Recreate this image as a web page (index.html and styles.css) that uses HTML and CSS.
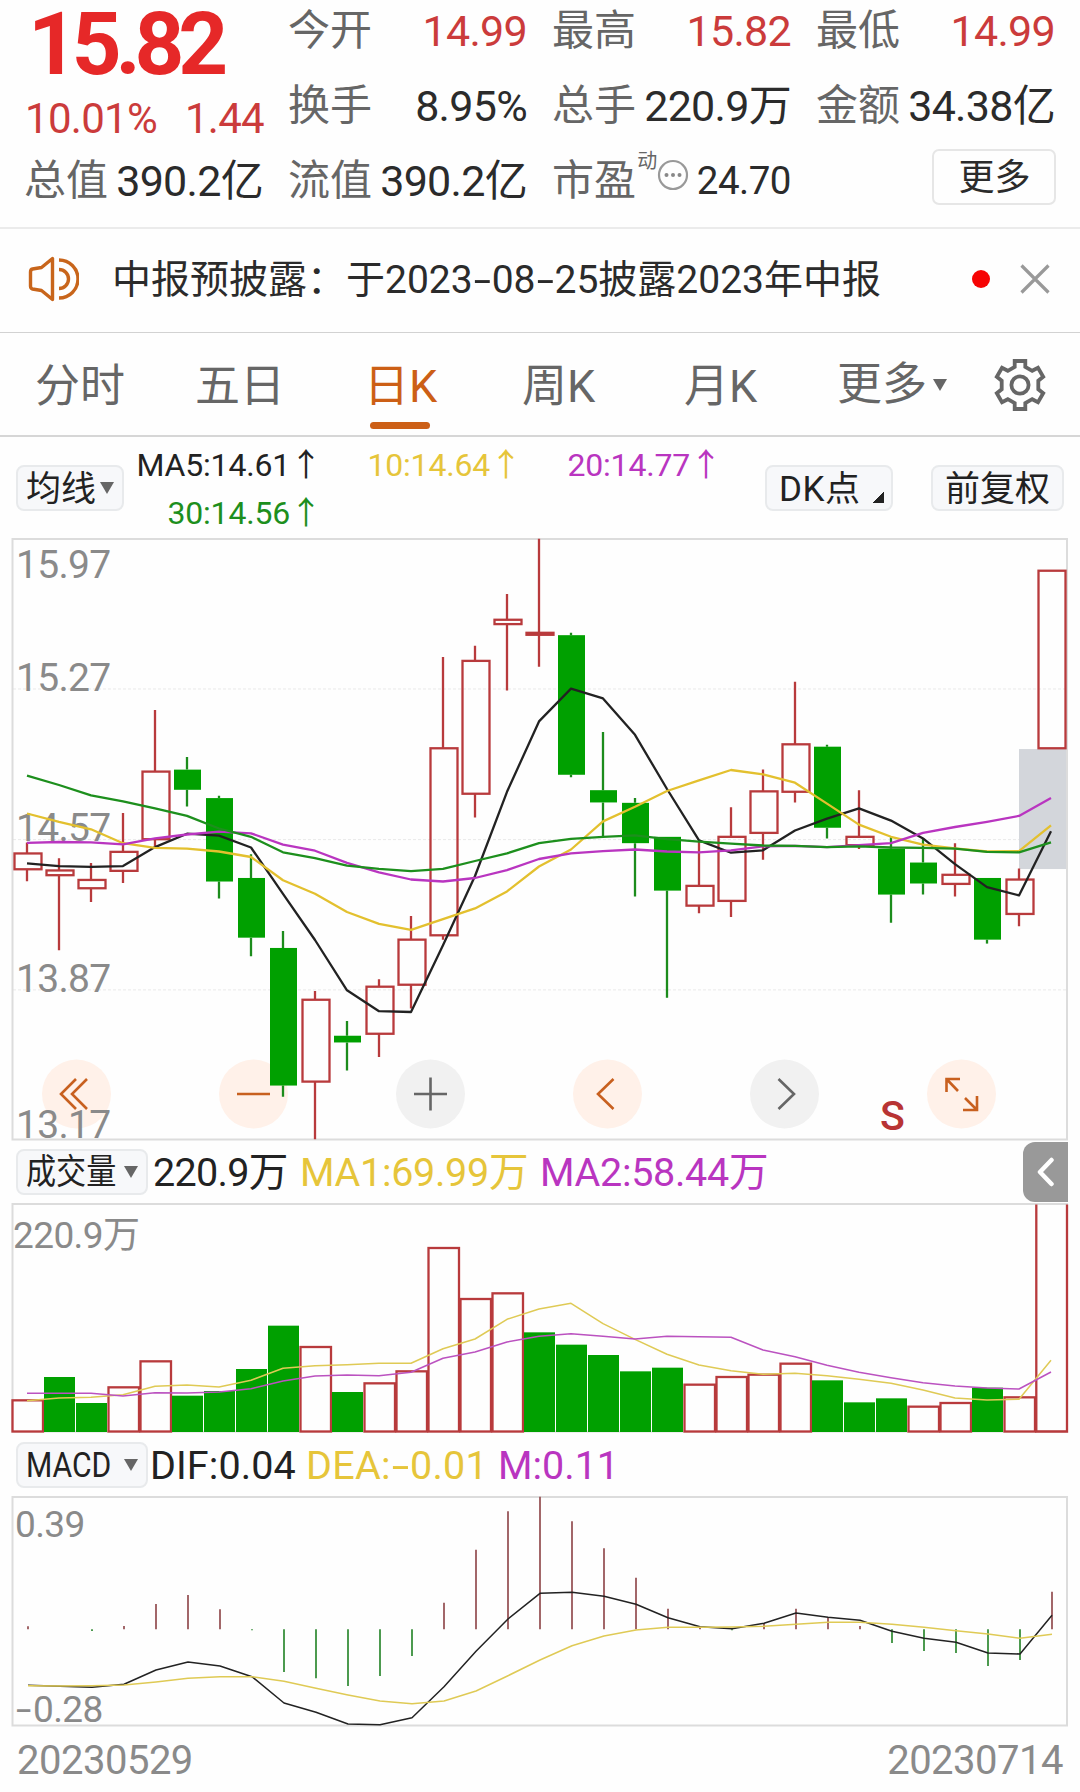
FILE: index.html
```html
<!DOCTYPE html>
<html lang="zh-CN">
<head>
<meta charset="utf-8">
<title>日K</title>
<link rel="stylesheet" href="styles.css">
</head>
<body>
<main class="page">
  <section class="quote">
    <div class="headline">
      <div class="price">15.82</div>
      <div class="change"><span>10.01%</span><span>1.44</span></div>
    </div>
    <div class="cell"><span class="label">今开</span><span class="value up">14.99</span></div>
    <div class="cell"><span class="label">最高</span><span class="value up">15.82</span></div>
    <div class="cell"><span class="label">最低</span><span class="value up">14.99</span></div>
    <div class="cell"><span class="label">换手</span><span class="value">8.95%</span></div>
    <div class="cell"><span class="label">总手</span><span class="value">220.9万</span></div>
    <div class="cell"><span class="label">金额</span><span class="value">34.38亿</span></div>
    <div class="cell"><span class="label">总值</span><span class="value">390.2亿</span></div>
    <div class="cell"><span class="label">流值</span><span class="value">390.2亿</span></div>
    <div class="cell">
      <span class="label">市盈</span><span class="sup">动</span>
      <svg class="info" width="32" height="32" viewBox="0 0 32 32"><circle cx="16" cy="16" r="14" fill="none" stroke="#999" stroke-width="2.2"/><g fill="#888"><circle cx="9.5" cy="16" r="2"/><circle cx="16" cy="16" r="2"/><circle cx="22.5" cy="16" r="2"/></g></svg>
      <span class="value small">24.70</span>
    </div>
    <div class="cell end"><button class="more">更多</button></div>
  </section>

  <section class="notice">
    <svg class="speaker" width="52" height="46" viewBox="0 0 52 46" fill="none" stroke="#c8651b" stroke-width="3.4" stroke-linejoin="round"><path d="M25.500 2.500V43.500L14.500 34.500L5.500 33Q3.500 32.500 3.500 30V16Q3.500 13.500 5.500 13L14.500 11.500Z"/><path d="M32 4A19 19 0 0 1 32 42M32 13.500A9.500 9.500 0 0 1 32 32.500"/></svg>
    <p class="notice-text">中报预披露：于2023<span class="dash">-</span>08<span class="dash">-</span>25披露2023年中报</p>
    <span class="dot"></span>
    <svg class="close" width="30" height="30" viewBox="0 0 30 30" stroke="#999" stroke-width="3.2"><path d="M1.500 1.500L28.500 28.500M28.500 1.500L1.500 28.500"/></svg>
  </section>

  <nav class="tabs">
    <a class="tab">分时</a>
    <a class="tab">五日</a>
    <a class="tab active">日K</a>
    <a class="tab">周K</a>
    <a class="tab">月K</a>
    <a class="tab more-tab">更多<i class="caret"></i></a>
    <svg class="gear" width="54" height="54" viewBox="0 0 54 54" fill="none" stroke="#666" stroke-width="3.8"><path d="M21.700 3H32.300V8.800L39.200 12.800L45 9.800L50.200 18.700L45.300 22.700V31.300L50.200 35.300L45 44.200L39.200 41.200L32.300 45.200V51H21.700V45.200L14.800 41.200L9 44.200L3.800 35.300L8.700 31.300V22.700L3.800 18.700L9 9.800L14.800 12.800L21.700 8.800Z"/><circle cx="27" cy="27" r="8.600"/></svg>
  </nav>

  <section class="averages">
    <button class="chip"><span class="chip-text">均线</span><i class="caret"></i></button>
    <div class="ma-grid">
      <span class="ma c-black">MA5:14.61<b class="arrow">↑</b></span>
      <span class="ma c-yellow">10:14.64<b class="arrow">↑</b></span>
      <span class="ma c-purple">20:14.77<b class="arrow">↑</b></span>
      <span class="ma c-green">30:14.56<b class="arrow">↑</b></span>
    </div>
    <button class="chip dk"><span class="chip-text">DK点</span><i class="corner"></i></button>
    <button class="chip fq"><span class="chip-text">前复权</span></button>
  </section>

  <svg class="chart" id="kline" width="1080" height="604" viewBox="0 537 1080 604"></svg>

  <section class="indicator volume-row">
    <button class="chip narrow"><span class="squeeze">成交量</span><i class="caret"></i></button>
    <span class="c-black vol">220.9万</span>
    <span class="c-yellow ma1">MA1:69.99万</span>
    <span class="c-purple ma2">MA2:58.44万</span>
    <button class="collapse"><svg width="18" height="30" viewBox="0 0 18 30" fill="none" stroke="#fff" stroke-width="4.500" stroke-linecap="round" stroke-linejoin="round"><path d="M14.500 3L3 15L14.500 27"/></svg></button>
  </section>

  <svg class="chart" id="volume" width="1080" height="231" viewBox="0 1203 1080 231"></svg>

  <section class="indicator macd-row">
    <button class="chip narrow"><span class="squeeze">MACD</span><i class="caret"></i></button>
    <span class="c-black dif">DIF:0.04</span>
    <span class="c-yellow dea">DEA:<span class="dash">-</span>0.01</span>
    <span class="c-purple m">M:0.11</span>
  </section>

  <svg class="chart" id="macd" width="1080" height="231" viewBox="0 1496 1080 231"></svg>

  <footer class="dates"><span>20230529</span><span>20230714</span></footer>
</main>
<script src="chart.js"></script>
</body>
</html>
```
FILE: styles.css
```css
* { box-sizing: border-box; }
body {
  margin: 0;
  background: #fefefe;
  color: #2b2b2b;
  font-family: Roboto, "Noto Sans CJK SC", sans-serif;
}
button { font-family: inherit; color: inherit; padding: 0; margin: 0; }
.page { width: 1080px; height: 1792px; display: flex; flex-direction: column; }

.quote {
  height: 229px;
  flex: none;
  display: grid;
  grid-template-columns: repeat(4, 240px);
  grid-template-rows: 60px 90px 60px;
  column-gap: 24px;
  padding-left: 24px;
  border-bottom: 2px solid #ebebeb;
}
.headline { grid-row: 1 / 3; display: flex; flex-direction: column; }
.price {
  height: 87px;
  line-height: 88px;
  padding-left: 4px;
  font-size: 87px;
  font-weight: 700;
  letter-spacing: -6.200px;
  color: #e62828;
}
.change {
  display: flex;
  justify-content: space-between;
  height: 63px;
  line-height: 64px;
  padding-left: 1px;
  font-size: 42px;
  letter-spacing: -0.700px;
  color: #cb3b3b;
}
.cell { display: flex; align-items: center; justify-content: space-between; white-space: nowrap; }
.cell.end { justify-content: flex-end; }
.label { font-size: 42px; line-height: 60px; padding-top: 2px; color: #666; }
.value { font-size: 43px; line-height: 60px; padding: 1px 1px 0 0; letter-spacing: -0.700px; }
.value.up { color: #cb3b3b; }
.value.small { font-size: 38.500px; letter-spacing: -0.500px; }
.sup { align-self: flex-start; font-size: 20px; line-height: 20px; padding-top: 1px; color: #666; }
.info { align-self: flex-start; margin: 9px 7px 0 -2px; }
.more {
  width: 124px;
  height: 56px;
  margin-top: -6px;
  padding: 2px 0 0 1px;
  border: 2px solid #e6e6e6;
  border-radius: 7px;
  background: #fefefe;
  font-size: 36px;
  line-height: 48px;
}

.notice {
  height: 104px;
  flex: none;
  display: flex;
  align-items: center;
  padding: 0 30px 3px 27px;
  border-bottom: 1px solid #d2d2d2;
}
.notice-text { margin: 0 0 0 33px; padding-top: 2px; font-size: 39px; line-height: 60px; white-space: nowrap; flex: 1; }
.dash { display: inline-block; width: 19px; text-align: center; transform: scaleX(1.600); letter-spacing: 0; }
.dot { width: 18px; height: 18px; border-radius: 50%; background: #f60404; margin-right: 30px; }

.tabs {
  height: 104px;
  flex: none;
  display: grid;
  grid-template-columns: 160px 169px 158px 162px 153px 156px auto;
  align-items: center;
  padding-left: 35px;
  border-bottom: 2px solid #d6d6d6;
}
.tab { display: flex; flex-direction: column; align-items: flex-start; color: #666; font-size: 45px; line-height: 108px; white-space: nowrap; height: 104px; }
.tab.active { color: #cc5f16; }
.tab.active::after { content: ""; width: 60px; height: 7px; margin: -19px 0 0 6px; border-radius: 4px; background: #cc5f16; }
.more-tab { flex-direction: row; align-items: center; }
.caret { border: 7px solid transparent; border-top: 12px solid #666; border-bottom: 0; display: block; flex: none; }
.more-tab .caret { margin-left: 6px; }

.averages { height: 100px; flex: none; display: flex; padding-left: 16px; }
.chip {
  flex: none;
  display: flex;
  align-items: center;
  width: 108px;
  height: 46px;
  margin-top: 28px;
  padding-left: 8px;
  border: 2px solid #e8eaec;
  border-radius: 8px;
  background: #f7f8fa;
  font-size: 35px;
  line-height: 42px;
  color: #222;
  white-space: nowrap;
}
.chip-text { padding-top: 4px; }
.averages .chip .caret { margin-left: 4px; }
.ma-grid {
  flex: none;
  width: 600px;
  margin-left: -8px;
  padding-top: 4px;
  display: grid;
  grid-template-columns: repeat(3, 200px);
  grid-template-rows: 48px 48px;
}
.ma { display: flex; justify-content: flex-end; font-size: 32px; line-height: 48px; letter-spacing: -0.200px; white-space: nowrap; }
.arrow { font-family: "Noto Sans CJK SC", sans-serif; font-weight: 400; width: 30px; margin-right: -4px; line-height: 42px; }
.chip.dk { width: 128px; margin-left: 49px; padding-left: 12px; letter-spacing: 0.500px; }
.corner { width: 11px; height: 11px; margin: 18px 0 0 13px; background: linear-gradient(135deg, transparent 50%, #222 50%); }
.chip.fq { width: 133px; margin-left: 38px; padding-left: 12px; }

.chart { display: block; flex: none; overflow: visible; }
.indicator { display: flex; align-items: center; flex: none; padding-left: 16px; font-size: 39.500px; white-space: nowrap; line-height: 46px; }
.indicator > span { padding-top: 2px; }
.volume-row { height: 62px; }
.macd-row { height: 62px; }
.chip.narrow { width: 132px; margin: 0; padding-left: 8px; }
.squeeze { display: block; width: 98px; padding-top: 2px; transform: scaleX(0.860); transform-origin: left; }
.vol { width: 152px; margin-left: 5px; letter-spacing: -0.700px; }
.ma1 { width: 240px; margin-left: -5px; letter-spacing: -0.300px; }
.ma2 { width: 483px; letter-spacing: -0.300px; }
.collapse { width: 45px; height: 60px; border: 0; border-radius: 12px 0 0 12px; background: #999; display: flex; align-items: center; justify-content: center; }
.dif { width: 156px; margin-left: 2px; letter-spacing: 0.100px; }
.dea { width: 192px; letter-spacing: 0.300px; }
.c-black { color: #222; }
.c-yellow { color: #e6c53a; }
.c-purple { color: #b935c0; }
.c-green { color: #1d8f1d; }

.dates { display: flex; justify-content: space-between; padding: 0 17px; font-size: 40px; line-height: 68px; letter-spacing: -0.500px; color: #8a8a8a; }

.frame { fill: none; stroke: #dcdcdc; stroke-width: 2; }
.grid { stroke: #e9e9e9; stroke-width: 1; stroke-dasharray: 3 2; }
.gap { fill: #d3d6db; }
.axis { fill: #8a8a8a; font-size: 39px; letter-spacing: -0.700px; }
.axis.mid { font-size: 37px; letter-spacing: -0.600px; }
.signal { fill: #b83434; font-size: 41px; font-weight: 500; }
.rise { fill: none; stroke: #b83a3c; stroke-width: 2.300; }
.hollow { fill: #fefefe; stroke: #b83a3c; stroke-width: 2.300; }
.fall { fill: #00a000; }
.fall-wick { stroke: #1c8c1c; stroke-width: 2.300; }
.line { fill: none; stroke-width: 2.300; stroke-linejoin: round; }
.line.thin { stroke-width: 1.500; }
.s-black { stroke: #222; }
.s-yellow { stroke: #e3c02e; }
.s-purple { stroke: #b935c0; }
.s-green { stroke: #1d8f1d; }
.thin.s-yellow { stroke: #dfca55; }
.thin.s-purple { stroke: #bb52c0; }
.bar-up { stroke: #985659; stroke-width: 1.800; }
.bar-down { stroke: #398f3c; stroke-width: 1.800; }
.knob-warm { fill: #fff1e9; }
.knob-cool { fill: #f1f1f1; }
.icon-warm { fill: none; stroke: #c8601f; stroke-width: 2.600; }
.icon-cool { fill: none; stroke: #666; stroke-width: 2.600; }
```
FILE: chart.js
```js
const NS = "http://www.w3.org/2000/svg";
const STEP = 32;

function add(svg, name, attrs, text) {
  const el = document.createElementNS(NS, name);
  for (const key in attrs) el.setAttribute(key, attrs[key]);
  if (text) el.textContent = text;
  svg.appendChild(el);
  return el;
}
function path(svg, cls, d) { add(svg, "path", { class: cls, d }); }
function series(svg, cls, values, toY, x0) {
  add(svg, "polyline", {
    class: "line " + cls,
    points: values.map((v, i) => `${x0 + i * STEP},${toY(v).toFixed(1)}`).join(" ")
  });
}

// Candles: [direction, high, body top, body bottom, low]
const candles = [
  [1,790,818,858,888],[1,830,861,873,1063],[1,842,885,906,941],[1,716,814,862,893],
  [1,455,611,782,800],[0,574,606,657,699],[0,672,678,889,932],[0,820,880,1031,1078],
  [0,1014,1057,1405,1433],[1,1166,1188,1395,1541],[0,1242,1279,1296,1367],[1,1136,1155,1274,1333],
  [1,976,1036,1150,1210],[1,321,552,1025,1036],[1,293,331,667,727],[1,162,227,238,406],
  [1,22,260,265,346],[0,260,266,619,625],[0,511,658,689,777],[0,678,690,792,927],
  [0,776,776,912,1183],[1,787,900,950,969],[1,701,776,938,979],[1,606,661,766,834],
  [1,384,542,662,689],[0,543,548,753,780],[1,658,776,797,807],[0,777,806,922,993],
  [0,780,841,894,922],[1,792,872,895,927],[0,880,880,1036,1046],[1,856,884,971,1002],
  [1,103,103,552,552]
];
const ma5 = [843,850,852,850,802,768,773,803,920,1037,1164,1217,1219,1050,875,662,484,401,426,518,655,785,816,810,760,730,704,735,780,845,903,924,762];
const ma10 = [717,738,757,792,804,806,813,827,886,920,966,996,1011,984,957,914,851,808,737,700,660,633,607,618,639,692,745,776,796,805,813,812,747];
const ma20 = [791,789,790,795,780,770,763,767,796,811,842,866,884,889,880,860,832,818,812,808,813,815,810,800,799,802,797,792,766,751,738,723,678];
const ma30 = [621,645,671,686,704,723,755,776,815,830,849,857,863,857,837,818,792,781,776,772,782,788,793,798,799,802,800,803,804,806,814,815,790];

const k = document.getElementById("kline");
const ky = v => 530 + v / 2.529;
[402, 783, 1163].forEach(v => path(k, "grid", `M13 ${ky(v)}H1067`));
[["15.97",564],["15.27",676.700],["14.57",826.600],["13.87",977.600]].forEach(([t, y]) => add(k, "text", { class: "axis", x: 16, y: y + 14 }, t));
["warm","warm","cool","warm","cool","warm"].forEach((c, i) => add(k, "circle", { class: "knob-" + c, cx: 76.500 + 177 * i, cy: 1094, r: 34.500 }));
path(k, "icon-warm", "M76 1079L61 1094L76 1109M87 1079L72 1094L87 1109");
path(k, "icon-warm", "M237 1094H270M613.500 1079L598 1094L613.500 1109");
path(k, "icon-cool", "M414 1094H447M430.500 1077.500V1110.500M778.500 1079L794 1094L778.500 1109");
path(k, "icon-warm", "M946.500 1092V1079H960M946.500 1079L958 1091M977 1096V1110H963M977 1110L965 1098");
add(k, "text", { class: "axis", x: 16, y: 1137.500 }, "13.17");
add(k, "text", { class: "signal", x: 880, y: 1130 }, "S");
add(k, "rect", { class: "gap", x: 1019, y: ky(554), width: 48, height: 120 });
add(k, "rect", { class: "frame", x: 12.500, y: 539, width: 1054.500, height: 600.500 });
candles.forEach(([up, high, top, bottom, low], i) => {
  const x = 27 + i * STEP;
  const cls = up ? "rise" : "fall-wick";
  path(k, cls, `M${x} ${ky(high)}V${ky(top)}M${x} ${ky(bottom)}V${ky(low)}`);
  if (up) add(k, "rect", { class: "rise", x: x - 12.500, y: ky(top), width: 27, height: (bottom - top) / 2.529 });
  else add(k, "rect", { class: "fall", x: x - 13, y: ky(top), width: 27, height: (bottom - top) / 2.529 });
});
series(k, "s-black", ma5, ky, 27);
series(k, "s-yellow", ma10, ky, 27);
series(k, "s-purple", ma20, ky, 27);
series(k, "s-green", ma30, ky, 27);

// Volume bars: [direction, top]
const bars = [[1,811],[0,741],[0,819],[1,772],[1,694],[0,797],[0,783],[0,717],[0,587],[1,651],[0,786],[1,760],[1,724],[1,354],[1,507],[1,490],[0,607],[0,644],[0,675],[0,724],[0,713],[1,764],[1,741],[1,734],[1,701],[0,751],[0,817],[0,805],[1,830],[1,819],[0,773],[1,802]];
const vma1 = [812,804,802,794,769,765,771,751,715,707,704,700,700,656,627,568,537,520,581,628,673,705,722,733,730,737,748,760,780,804,810,808,691];
const vma2 = [790,790,790,798,788,789,786,776,753,738,735,737,727,685,666,636,619,611,619,627,619,620,622,660,680,706,727,743,758,768,774,777,726];
const v = document.getElementById("volume");
const vy = n => 1130 + n / 3;
add(v, "rect", { class: "frame", x: 12.500, y: 1204, width: 1054.500, height: 227.500 });
add(v, "text", { class: "axis mid", x: 13, y: 1248 }, "220.9万");
bars.forEach(([up, top], i) => {
  const y = vy(top);
  if (up) add(v, "rect", { class: "hollow", x: 12.500 + i * STEP, y, width: 30.500, height: 1431.500 - y });
  else add(v, "rect", { class: "fall", x: 12 + i * STEP, y, width: 31, height: 1432 - y });
});
// The latest bar reaches the top of the panel and stays open there
path(v, "rise", "M1036.300 1204.500V1431.500H1067V1204.500");
series(v, "thin s-yellow", vma1, vy, 27);
series(v, "thin s-purple", vma2, vy, 27);

const hist = [589,598,603,588,522,495,538,601,726,745,768,738,678,518,359,244,200,274,355,443,536,594,601,580,536,563,588,639,663,669,708,690,485];
const dif = [766,769,772,763,720,696,708,740,819,847,882,884,863,770,664,567,490,487,499,523,563,590,596,580,549,562,571,604,625,637,669,672,556];
const dea = [767,768,767,765,756,745,740,740,754,775,795,813,821,813,783,737,690,647,618,600,592,592,591,589,583,577,577,583,592,602,612,625,613];
const m = document.getElementById("macd");
const my = n => 1430 + n / 3;
add(m, "rect", { class: "frame", x: 12.500, y: 1497, width: 1054.500, height: 228.500 });
add(m, "text", { class: "axis mid", x: 15, y: 1537 }, "0.39");
add(m, "text", { class: "axis mid", x: 33, y: 1722 }, "0.28");
add(m, "text", { class: "axis mid", transform: "translate(16 1722) scale(1.500 1)" }, "-");
hist.forEach((h, i) => path(m, h < 598 ? "bar-up" : "bar-down", `M${28 + i * STEP} ${my(598)}V${my(h)}`));
series(m, "thin s-black", dif, my, 28);
series(m, "thin s-yellow", dea, my, 28);
```
